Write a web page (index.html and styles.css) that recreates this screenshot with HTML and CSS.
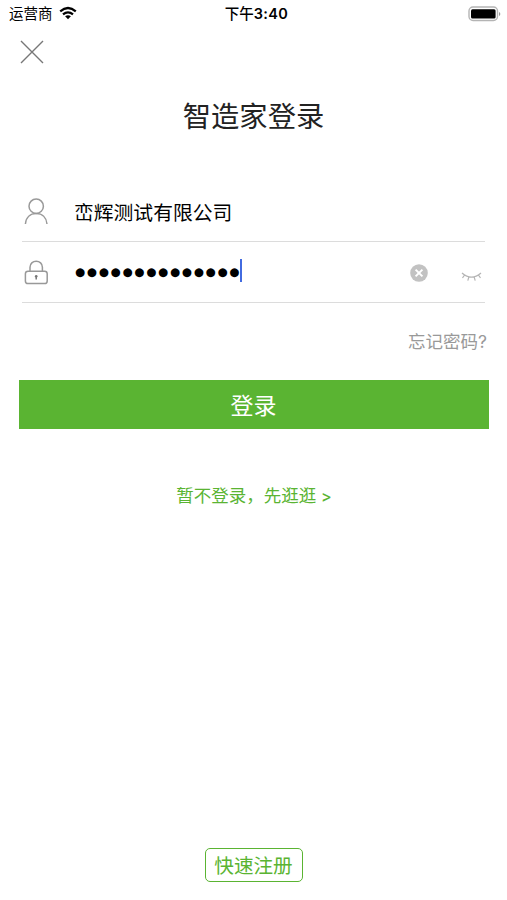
FILE: index.html
```html
<!DOCTYPE html>
<html lang="zh-CN">
<head>
<meta charset="utf-8">
<title>智造家登录</title>
<link rel="stylesheet" href="styles.css">
</head>
<body>
<div class="screen">
  <header class="status">
    <div class="carrier"><span>运营商</span>
      <svg class="wifi" width="18" height="14" viewBox="0 0 18 14"><path d="M1.2 5.4Q9-1.4 16.8 5.4M4 8.4Q9 4.2 14 8.4" fill="none" stroke="#000" stroke-width="2.2"/><path d="M6.1 10.3Q9 8 11.9 10.3L9 13.2Z"/></svg>
    </div>
    <div class="time">下午<span class="digits">3:40</span></div>
    <svg class="battery" width="33" height="16" viewBox="0 0 33 16"><rect x="1" y="1" width="28.5" height="13.5" rx="4" fill="#fff" stroke="#b4b4b4" stroke-width="1.4"/><rect x="3" y="3.2" width="24.6" height="9.2" rx="1.5"/><path d="M31 6v4Q32.3 9.4 32.3 8T31 6Z" fill="#999"/></svg>
  </header>
  <nav class="nav">
    <svg width="24" height="24" viewBox="0 0 24 24"><path d="M1 1L23 23M23 1L1 23" stroke="#777" stroke-width="1.4"/></svg>
  </nav>
  <h1 class="title">智造家登录</h1>
  <main class="form">
    <div class="field">
      <svg class="icon" width="26" height="28" viewBox="0 0 26 28" fill="none" stroke="#999" stroke-width="1.5"><circle cx="14.2" cy="9.2" r="7.2"/><path d="M3.4 27C4 20.5 8.3 16.6 14.2 16.6S24.4 20.5 25 27"/></svg>
      <span class="account">峦辉测试有限公司</span>
    </div>
    <div class="field">
      <svg class="icon" width="26" height="28" viewBox="0 0 26 28" fill="none" stroke="#999" stroke-width="1.5"><rect x="3.4" y="13.2" width="21.8" height="12.4" rx="2.6"/><path d="M8 13V9.2C8 5.6 10.8 3.2 14.2 3.2S20.4 5.6 20.4 9.2V13"/><path d="M14.2 18.6v3" stroke="#777"/><circle cx="14.2" cy="18.2" r="1.3" fill="#777" stroke="none"/></svg>
      <span class="password">●●●●●●●●●●●●●●</span><i class="caret"></i>
      <svg class="clear" width="18" height="18" viewBox="0 0 18 18"><circle cx="9" cy="9" r="8.8" fill="#c2c2c2"/><path d="M5.6 5.6L12.4 12.4M12.4 5.6L5.6 12.4" stroke="#fff" stroke-width="2"/></svg>
      <svg class="eye" width="21" height="10" viewBox="0 0 21 10" fill="none" stroke="#b5b5b5" stroke-width="1.2"><path d="M1 1Q10.5 9.4 20 1M3.4 3.2L1.5 6M7.8 5.1L6.8 8.6M13.2 5.1L14.2 8.6M17.6 3.2L19.5 6"/></svg>
    </div>
    <a class="forgot">忘记密码?</a>
  </main>
  <button class="login">登录</button>
  <a class="skip">暂不登录，先逛逛 <span class="arrow">&gt;</span></a>
  <button class="register">快速注册</button>
</div>
</body>
</html>
```
FILE: styles.css
```css
* { box-sizing: border-box; }
body {
  margin: 0;
  background: #fff;
  color: #000;
  font-family: Inter, "Noto Sans CJK SC", sans-serif;
}
svg { display: block; flex: none; }
.screen {
  height: 900px;
  display: flex;
  flex-direction: column;
  align-items: center;
  overflow: hidden;
}
.status {
  width: 100%;
  height: 28px;
  padding: 0 6px 0 9px;
  display: grid;
  grid-template-columns: 1fr auto 1fr;
  align-items: center;
  font-size: 14.5px;
  line-height: 28px;
}
.carrier { display: flex; align-items: center; gap: 7px; }
.wifi { margin: -2px 0 0 -1px; }
.time { font-weight: 500; white-space: nowrap; padding-left: 3px; }
.digits { font-weight: 600; letter-spacing: 0.4px; }
.battery { justify-self: end; margin-top: -1px; }
.nav { width: 100%; height: 48px; padding: 12px 20px; }
.title {
  margin: 17px 0 0;
  height: 48px;
  font-size: 28.3px;
  line-height: 48px;
  font-weight: 400;
  color: #222;
}
.form {
  width: 463px;
  margin-top: 40px;
  display: flex;
  flex-direction: column;
}
.field {
  height: 61px;
  display: flex;
  align-items: center;
  border-bottom: 1px solid #dcdcdc;
}
.icon { margin-right: 27px; }
.account { font-size: 19.8px; margin-left: -1px; }
.password {
  font-family: "DejaVu Sans", sans-serif;
  font-size: 11.6px;
  letter-spacing: 1.75px;
  white-space: nowrap;
}
.caret { width: 2px; height: 23px; margin: -3px 0 0 -1.5px; background: #426be0; }
.clear { margin: 2px 0 0 auto; }
.eye { margin: 9px 3px 0 33px; }
.forgot {
  align-self: flex-end;
  margin: 24px -2px 0 0;
  font-size: 17.5px;
  line-height: 30px;
  color: #999;
}
button { font-family: inherit; padding: 0; }
.login {
  width: 470px;
  height: 49px;
  margin-top: 23px;
  border: 0;
  padding-top: 3px;
  background: #5ab432;
  color: #fff;
  font-size: 23px;
  line-height: 46px;
}
.skip {
  margin-top: 52px;
  padding-left: 1px;
  font-size: 17.5px;
  line-height: 30px;
  color: #5ab432;
}
.arrow { font-size: 16px; font-weight: 500; }
.register {
  width: 98px;
  height: 34px;
  margin: auto 0 18px;
  border: 1.5px solid #5ab432;
  border-radius: 5px;
  padding-top: 1px;
  background: #fff;
  color: #5ab432;
  font-size: 19.6px;
  line-height: 30px;
}
```
